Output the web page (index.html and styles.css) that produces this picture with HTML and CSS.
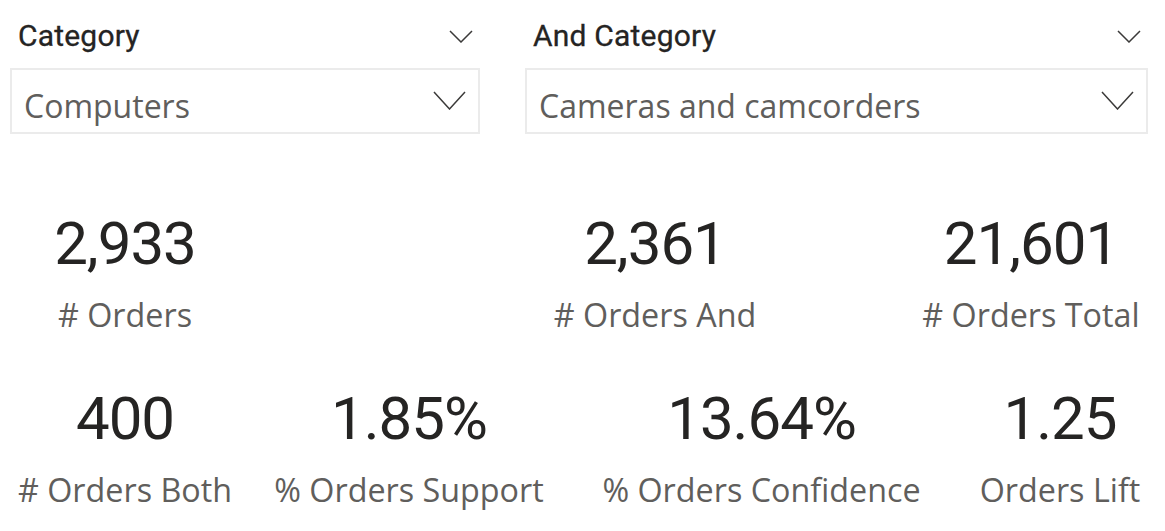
FILE: index.html
```html
<!DOCTYPE html>
<html lang="en">
<head>
<meta charset="utf-8">
<title>Orders basket analysis</title>
<link rel="stylesheet" href="styles.css">
</head>
<body>
<div class="page">
  <div class="slicers">
    <div class="slicer slicer-a">
      <div class="slicer-header">
        <span class="slicer-title">Category</span>
        <svg class="chev-sm" width="24" height="13" viewBox="0 0 24 13"><polyline points="1,1 12,12 23,1" fill="none" stroke="#3b3a39" stroke-width="1.5"/></svg>
      </div>
      <div class="dropdown">
        <span class="dropdown-value">Computers</span>
        <svg class="chev-lg" width="33" height="19" viewBox="0 0 33 19"><polyline points="1,1 16.5,18 32,1" fill="none" stroke="#3b3a39" stroke-width="1.5"/></svg>
      </div>
    </div>
    <div class="slicer slicer-b">
      <div class="slicer-header">
        <span class="slicer-title">And Category</span>
        <svg class="chev-sm" width="24" height="13" viewBox="0 0 24 13"><polyline points="1,1 12,12 23,1" fill="none" stroke="#3b3a39" stroke-width="1.5"/></svg>
      </div>
      <div class="dropdown">
        <span class="dropdown-value">Cameras and camcorders</span>
        <svg class="chev-lg" width="33" height="19" viewBox="0 0 33 19"><polyline points="1,1 16.5,18 32,1" fill="none" stroke="#3b3a39" stroke-width="1.5"/></svg>
      </div>
    </div>
  </div>

  <div class="cards row-1">
    <div class="card col-1">
      <div class="card-value">2,933</div>
      <div class="card-label"># Orders</div>
    </div>
    <div class="card col-3">
      <div class="card-value">2,361</div>
      <div class="card-label"># Orders And</div>
    </div>
    <div class="card col-5">
      <div class="card-value">21,601</div>
      <div class="card-label"># Orders Total</div>
    </div>
  </div>

  <div class="cards row-2">
    <div class="card">
      <div class="card-value">400</div>
      <div class="card-label"># Orders Both</div>
    </div>
    <div class="card">
      <div class="card-value">1.85%</div>
      <div class="card-label">% Orders Support</div>
    </div>
    <div class="card">
      <div class="card-value">13.64%</div>
      <div class="card-label">% Orders Confidence</div>
    </div>
    <div class="card">
      <div class="card-value">1.25</div>
      <div class="card-label">Orders Lift</div>
    </div>
  </div>
</div>
</body>
</html>
```

FILE: styles.css
```css
* { box-sizing: border-box; }

html, body {
  margin: 0;
  padding: 0;
  background: #ffffff;
}

.page {
  width: 1165px;
  height: 531px;
  overflow: hidden;
}

.slicers {
  display: flex;
  padding-left: 10px;
}

.slicer-a { width: 470px; }
.slicer-b { width: 623px; margin-left: 45px; }

.slicer-header {
  display: flex;
  justify-content: space-between;
  align-items: center;
  height: 36px;
  margin-top: 18px;
  padding: 0 7px 0 8px;
}

.slicer-title {
  font-family: Roboto, "Liberation Sans", sans-serif;
  font-weight: 400;
  font-size: 30px;
  line-height: 36px;
  letter-spacing: 0.2px;
  color: #252423;
  -webkit-text-stroke: 0.3px #252423;
}

.chev-sm { display: block; }

.dropdown {
  margin-top: 14px;
  height: 66px;
  border: 2px solid #ebebeb;
  display: flex;
  justify-content: space-between;
  align-items: center;
  padding: 9px 12px 0 12px;
}

.dropdown-value {
  font-family: "Open Sans", "Noto Sans", sans-serif;
  font-size: 32px;
  line-height: 44px;
  color: #605e5c;
}

.chev-lg { display: block; margin-bottom: 10px; }

.cards {
  display: grid;
}

.row-1 {
  margin-top: 75px;
  grid-template-columns: 250px 280px 250px 120px 262px;
}

.row-1 .col-1 { grid-column: 1; }
.row-1 .col-3 { grid-column: 3; }
.row-1 .col-5 { grid-column: 5; }

.row-2 {
  margin-top: 48px;
  grid-template-columns: 250px 318px 387px 210px;
}

.card {
  display: flex;
  flex-direction: column;
  align-items: center;
}

.card-value {
  font-family: Roboto, "Liberation Sans", sans-serif;
  font-size: 60px;
  line-height: 70px;
  letter-spacing: -1px;
  color: #252423;
  white-space: nowrap;
}

.card-label {
  margin-top: 13px;
  font-family: "Open Sans", "Noto Sans", sans-serif;
  font-size: 32.3px;
  line-height: 44px;
  color: #605e5c;
  white-space: nowrap;
}
```
